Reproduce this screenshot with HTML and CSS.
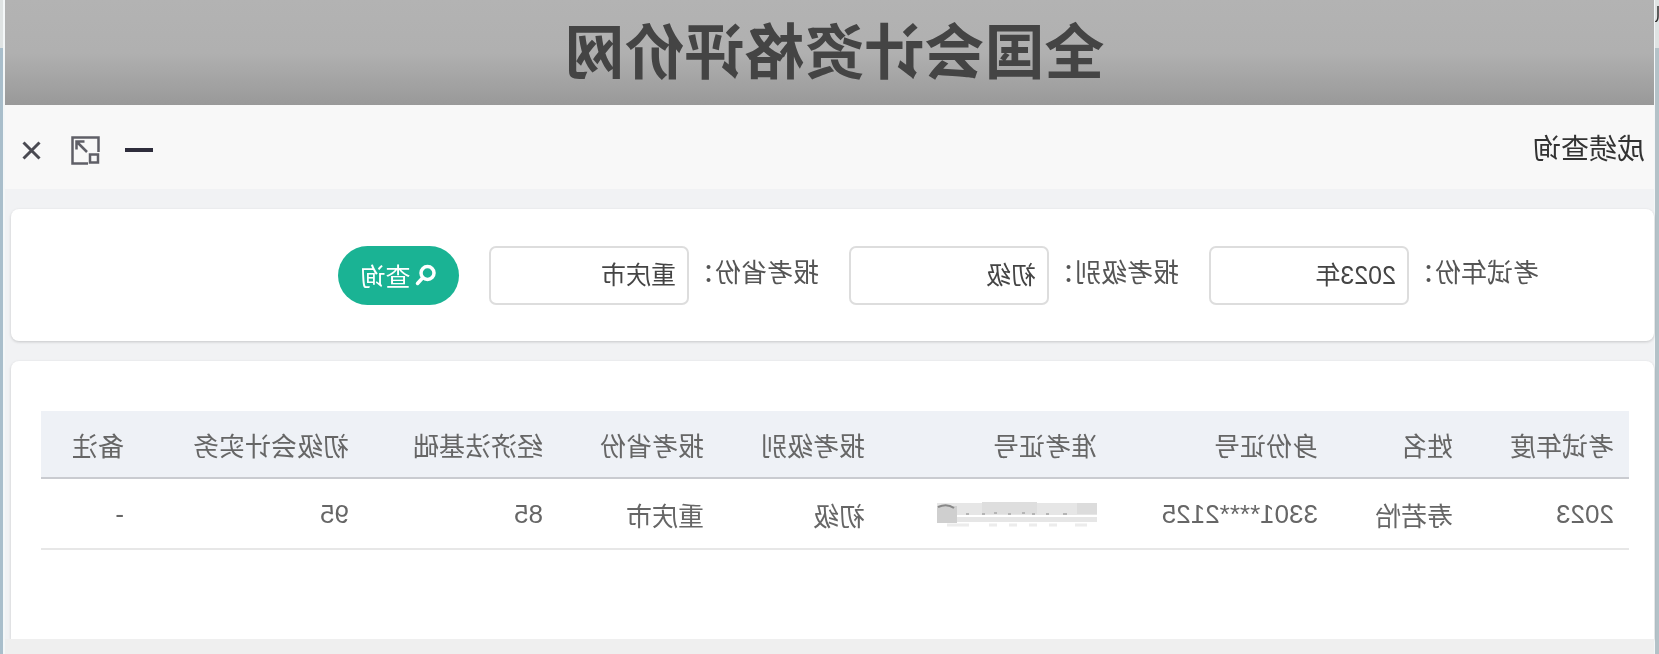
FILE: index.html
```html
<!DOCTYPE html>
<html lang="zh-CN">
<head>
<meta charset="utf-8">
<title>成绩查询</title>
<link rel="stylesheet" href="styles.css">
</head>
<body>
<div class="page">
  <svg class="edge-glyph" width="4" height="20" viewBox="0 0 4 20" fill="none" stroke="#333" stroke-width="1.500"><path d="M1 4V14Q1 19 4 20"/></svg>
  <header class="banner">全国会计资格评价网</header>
  <div class="dialog">
    <div class="bar">
      <span class="bar-title">成绩查询</span>
      <div class="bar-icons">
        <svg class="i-min" width="28" height="4" viewBox="0 0 28 4"><rect width="28" height="4" fill="#2e2d3c"/></svg>
        <svg class="i-max" width="29" height="29" viewBox="0 0 29 29" fill="none" stroke="#5f5f67" stroke-width="2.500"><path d="M1.500 16V1.500H27.500V27.500H12"/><rect x="2" y="18.500" width="8" height="8"/><path d="M13 16L23 6M15.500 5.500H23.500V13.500"/></svg>
        <svg class="i-close" width="19" height="19" viewBox="0 0 19 19" stroke="#4a4a52" stroke-width="3"><path d="M1.500 1.500L17.500 17.500M17.500 1.500L1.500 17.500"/></svg>
      </div>
    </div>
    <div class="body">
      <form class="card filter">
        <div class="field"><label class="lbl">考试年份：</label><div class="inp">2023年</div></div>
        <div class="field"><label class="lbl">报考级别：</label><div class="inp">初级</div></div>
        <div class="field"><label class="lbl">报考省份：</label><div class="inp">重庆市</div></div>
        <button class="btn" type="button">
          <svg width="22" height="22" viewBox="0 0 22 22" fill="none" stroke="#fff" stroke-width="3.500"><circle cx="9.500" cy="9" r="6.500"/><path d="M14.500 14L19.500 19.500" stroke-linecap="round"/></svg>
          查询
        </button>
      </form>
      <div class="card result">
        <table class="tbl">
          <thead>
            <tr><th>考试年度</th><th>姓名</th><th>身份证号</th><th>准考证号</th><th>报考级别</th><th>报考省份</th><th>经济法基础</th><th>初级会计实务</th><th>备注</th></tr>
          </thead>
          <tbody>
            <tr>
              <td>2023</td><td>寿若怡</td><td>3301****2125</td>
              <td>
                <svg class="mosaic" width="160" height="25" viewBox="0 0 160 25">
                  <rect x="0" y="1" width="160" height="19" fill="#e6e6e6"/>
                  <rect x="0" y="1" width="20" height="11" fill="#dcdcdc"/>
                  <rect x="60" y="0" width="55" height="12" fill="#dedede"/>
                  <rect x="140" y="4" width="20" height="17" fill="#cfcfcf"/>
                  <rect x="0" y="13" width="140" height="2" fill="#fff"/>
                  <path d="M30 12H34M48 12H51M62 12H65M72 11H75M86 12H89M100 11H103M112 12H115M128 12H131" stroke="#b5b5b5" stroke-width="2"/>
                  <path d="M143 6Q150 1 159 5" stroke="#888" stroke-width="2" fill="none"/>
                  <path d="M10 23H22M40 23H48M60 23H68M80 23H88M100 23H108M128 23H150" stroke="#ececec" stroke-width="3"/>
                </svg>
              </td>
              <td>初级</td><td>重庆市</td><td>85</td><td>95</td><td>-</td>
            </tr>
          </tbody>
        </table>
      </div>
    </div>
    <div class="foot"></div>
  </div>
</div>
</body>
</html>
```
FILE: styles.css
```css
* { box-sizing: border-box; }
html, body { margin: 0; padding: 0; height: 654px; overflow: hidden; background: #fff; }
body { font-family: "Liberation Sans", "Noto Sans CJK SC", sans-serif; }
.page {
  position: relative;
  width: 1659px;
  height: 654px;
  padding: 0 5px;
  overflow: hidden;
  transform: scaleX(-1);
  background:
    linear-gradient(to bottom, #dfe3e3 0 48px, transparent 48px) left / 4px 100% no-repeat,
    linear-gradient(to bottom, #dfe3e3 0 48px, transparent 48px) right / 3px 100% no-repeat,
    linear-gradient(to right, #b4c2c8 0 4px, #f4f7f8 4px, #f4f7f8 5px, transparent 5px, transparent 1654px, #f4f7f8 1654px, #f4f7f8 1656px, #a9becb 1656px);
}
.edge-glyph { position: absolute; left: 0; top: 2px; }
.banner {
  height: 105px;
  padding-right: 10px;
  background: linear-gradient(to bottom, #b3b3b3 0, #b0b0b0 50%, #999 100%);
  color: #444;
  font-size: 60px;
  font-weight: 700;
  line-height: 108px;
  text-align: center;
  white-space: nowrap;
}
.dialog { height: 549px; display: flex; flex-direction: column; background: #f1f2f4; }
.bar {
  height: 84px;
  flex: none;
  background: #f8f8f8;
  padding: 0 17px 0 9px;
  display: flex;
  align-items: center;
  justify-content: space-between;
}
.bar-title { font-size: 28px; color: #333; }
.bar-icons { display: flex; align-items: center; padding-top: 6px; }
.i-min { margin-right: 25px; }
.i-max { margin-right: 30px; }
.body { flex: 1; padding: 20px 6px 0 0; display: flex; flex-direction: column; gap: 20px; }
.card { background: #fff; border-radius: 8px; box-shadow: 0 1px 3px rgba(0,0,0,.18); }
.filter { height: 132px; display: flex; align-items: center; padding-left: 115px; gap: 30px; }
.field { display: flex; align-items: center; }
.lbl { width: 130px; font-size: 26px; line-height: 30px; padding-bottom: 4px; color: #555; white-space: nowrap; }
.inp {
  width: 200px;
  height: 59px;
  border: 2px solid #ddd;
  border-radius: 7px;
  padding: 0 11px;
  font-size: 25px;
  line-height: 55px;
  color: #444;
}
.btn {
  width: 121px;
  height: 59px;
  border: 0;
  border-radius: 30px;
  background: #1ab394;
  color: #fff;
  font: inherit;
  font-size: 25px;
  display: flex;
  align-items: center;
  justify-content: center;
  gap: 4px;
  padding: 0;
}
.result { flex: 1; border-radius: 8px 8px 0 0; padding: 50px 20px 0 25px; }
.tbl { width: 1588px; border-collapse: collapse; table-layout: fixed; font-size: 26px; color: #666; text-align: left; white-space: nowrap; }
.tbl th { height: 67px; padding: 0 15px; font-weight: 400; background: #eef1f6; border-bottom: 2px solid #c9cbd0; color: #666; }
.tbl td { height: 71px; padding: 2px 15px 0; border-bottom: 2px solid #e7e7e7; }
.tbl th:nth-child(1) { width: 161px; }
.tbl th:nth-child(2) { width: 135px; }
.tbl th:nth-child(3) { width: 221px; }
.tbl th:nth-child(4) { width: 232px; }
.tbl th:nth-child(5) { width: 161px; }
.tbl th:nth-child(6) { width: 161px; }
.tbl th:nth-child(7) { width: 194px; }
.tbl th:nth-child(8) { width: 225px; }
.mosaic { display: block; }
.foot { height: 15px; flex: none; background: #efefef; }
```
